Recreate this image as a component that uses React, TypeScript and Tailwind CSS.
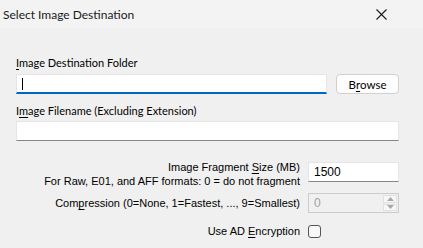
import React from 'react';

const uiFont = { fontFamily: 'Lato, "Liberation Sans", sans-serif' };
const smallFont = { fontFamily: '"Liberation Sans", Arial, sans-serif' };

const Mn = ({ children }: { children: React.ReactNode }) => (
	<span className="underline underline-offset-2">{children}</span>
);

const TextBox = ({ value, className = '' }: { value?: string; className?: string }) => (
	<div
		className={`h-[20px] bg-white border border-[#e5e5e5] border-b-[#868686] flex items-center pl-[5px] text-black ${className}`}
	>
		{value}
	</div>
);

const App = () => {
	return (
		<div className="w-[423px] h-[248px] bg-[#f0f0f0] text-[12px] leading-[15px] text-black" style={uiFont}>
			<div className="h-[28px] bg-[#f3f3f3] flex items-center justify-between pl-[3px] pr-[36px]">
				<span className="text-[12px] text-[#1a1a1a]">Select Image Destination</span>
				<svg width="11" height="11" viewBox="0 0 11 11" className="mt-[1px]">
					<path d="M0.5 0.5 L10.5 10.5 M10.5 0.5 L0.5 10.5" stroke="#1a1a1a" strokeWidth="1.1" />
				</svg>
			</div>

			<div className="pl-4 pr-[24px] pt-[27px] flex flex-col">
				<div className="text-[11px]">
					<Mn>I</Mn>mage Destination Folder
				</div>
				<div className="flex items-center mt-[4px]">
					<div className="w-[311px] h-[20px] bg-white border border-[#e5e5e5] border-b-2 border-b-[#0067c0] flex items-center pl-[5px]">
						<div className="w-px h-[12px] bg-black" />
					</div>
					<button className="ml-[9px] w-[63px] h-[20px] rounded-[4px] border border-[#d0d0d0] bg-[#fdfdfd] text-[11.5px] leading-[15px] flex items-center justify-center">
						B<Mn>r</Mn>owse
					</button>
				</div>

				<div className="mt-[9px] text-[11px]">
					I<Mn>m</Mn>age Filename (Excluding Extension)
				</div>
				<TextBox className="mt-[3px] w-[383px] text-[12px]" />

				<div className="flex flex-col mt-[21px] text-[11px] leading-[14px]" style={smallFont}>
					<div className="flex items-start gap-[8px] h-[26px]">
						<div className="flex-1 text-right whitespace-nowrap -mt-[2px]">
							<div>
								Image Fragment <Mn>S</Mn>ize (MB)
							</div>
							<div>For Raw, E01, and AFF formats: 0 = do not fragment</div>
						</div>
						<TextBox value="1500" className="w-[91px] text-[12px]" />
					</div>

					<div className="flex items-center gap-[8px] mt-[5px] h-[20px]">
						<div className="flex-1 text-right whitespace-nowrap">
							Com<Mn>p</Mn>ression (0=None, 1=Fastest, ..., 9=Smallest)
						</div>
						<div className="w-[91px] h-[20px] border border-[#cccccc] bg-[#f0f0f0] flex">
							<div className="flex-1 flex items-center pl-[5px] text-[12px] text-[#a0a0a0]">0</div>
							<div className="w-[16px] flex flex-col gap-px p-px">
								<div className="flex-1 bg-[#f7f7f7] border border-[#e0e0e0] flex items-center justify-center">
									<svg width="7" height="4" viewBox="0 0 7 4">
										<path d="M0 4 L3.5 0 L7 4 Z" fill="#a8a8a8" />
									</svg>
								</div>
								<div className="flex-1 bg-[#f7f7f7] border border-[#e0e0e0] flex items-center justify-center">
									<svg width="7" height="4" viewBox="0 0 7 4">
										<path d="M0 0 L7 0 L3.5 4 Z" fill="#a8a8a8" />
									</svg>
								</div>
							</div>
						</div>
					</div>

					<div className="flex items-center gap-[8px] mt-[8px] h-[20px]">
						<div className="flex-1 text-right whitespace-nowrap">
							Use AD <Mn>E</Mn>ncryption
						</div>
						<div className="w-[91px] flex">
							<div className="w-[13px] h-[13px] rounded-[3px] border border-[#555] bg-[#f7f7f7]" />
						</div>
					</div>
				</div>
			</div>
		</div>
	);
};

export default App;
